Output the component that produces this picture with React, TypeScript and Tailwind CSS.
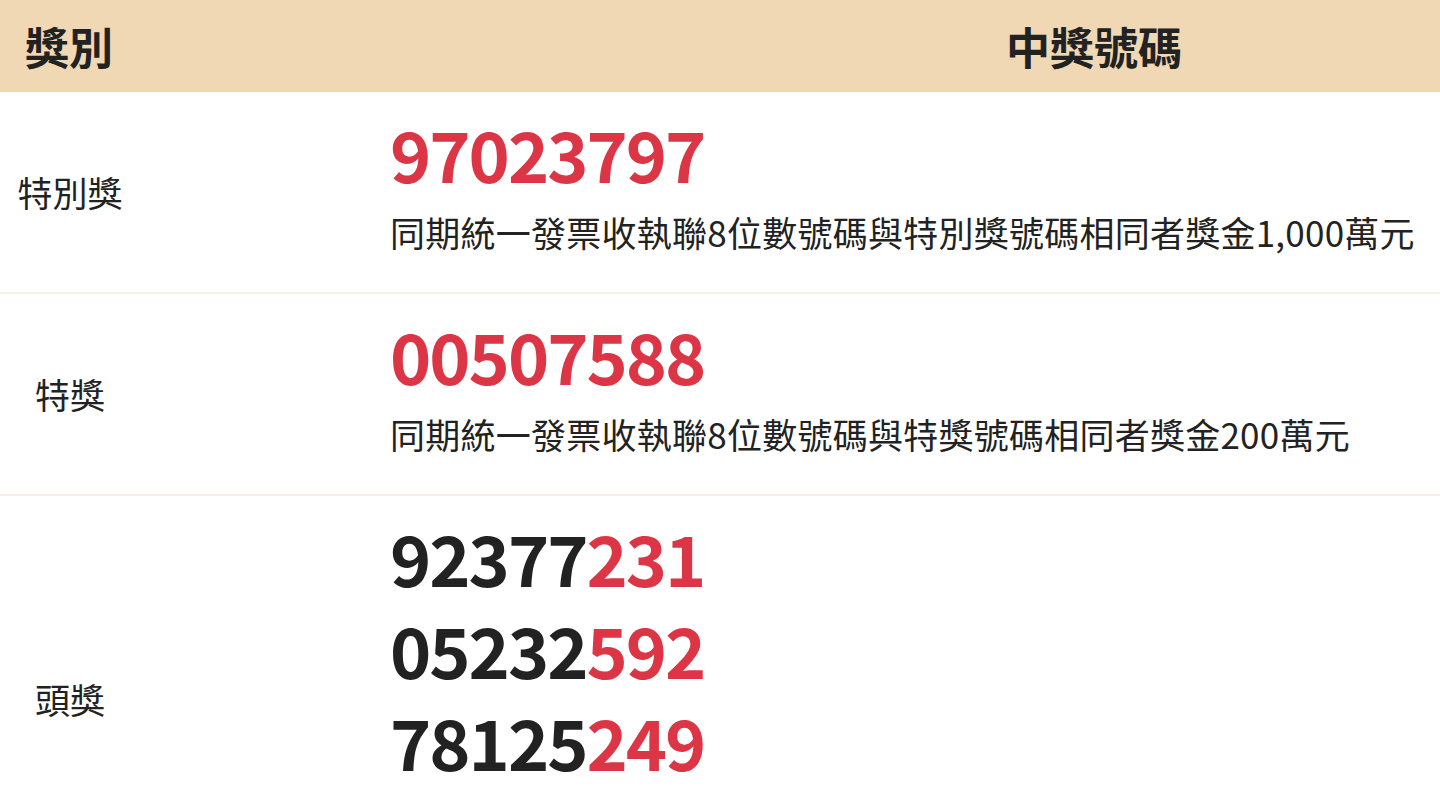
import React from "react";

interface Prize {
  name: string;
  numbers: { head: string; tail: string }[];
  note?: string;
}

const prizes: Prize[] = [
  {
    name: "特別獎",
    numbers: [{ head: "", tail: "97023797" }],
    note: "同期統一發票收執聯8位數號碼與特別獎號碼相同者獎金1,000萬元",
  },
  {
    name: "特獎",
    numbers: [{ head: "", tail: "00507588" }],
    note: "同期統一發票收執聯8位數號碼與特獎號碼相同者獎金200萬元",
  },
  {
    name: "頭獎",
    numbers: [
      { head: "92377", tail: "231" },
      { head: "05232", tail: "592" },
      { head: "78125", tail: "249" },
    ],
  },
];

const font = "font-['Noto_Sans_CJK_TC','Noto_Sans',sans-serif]";

export default function App() {
  return (
    <div className={`min-h-screen bg-white text-[#222] ${font}`}>
      <div className="grid grid-cols-[390px_1fr] h-[92px] items-center bg-[#efd8b3]">
        <div className="pl-[25px] text-[44px] font-bold leading-none">獎別</div>
        <div className="pl-[616px] text-[44px] font-bold leading-none">中獎號碼</div>
      </div>

      {prizes.map((p, i) => (
        <div
          key={p.name}
          className={`grid grid-cols-[390px_1fr] ${i > 0 ? "border-t-2 border-[#fbeee4]" : ""}`}
        >
          <div className="flex items-center">
            <div className="w-[140px] text-center text-[35px]">{p.name}</div>
          </div>
          <div className={`pt-[15px] ${p.note ? "pb-[34px]" : "pb-[115px]"}`}>
            {p.numbers.map((n) => (
              <div
                key={n.head + n.tail}
                className="text-[70px] font-bold leading-[92px] tracking-[-2px]"
              >
                <span>{n.head}</span>
                <span className="text-[#dc3545]">{n.tail}</span>
              </div>
            ))}
            {p.note && (
              <div className="mt-[7px] text-[35px] leading-[52px] tracking-[0.25px] whitespace-nowrap">
                {p.note}
              </div>
            )}
          </div>
        </div>
      ))}
    </div>
  );
}
